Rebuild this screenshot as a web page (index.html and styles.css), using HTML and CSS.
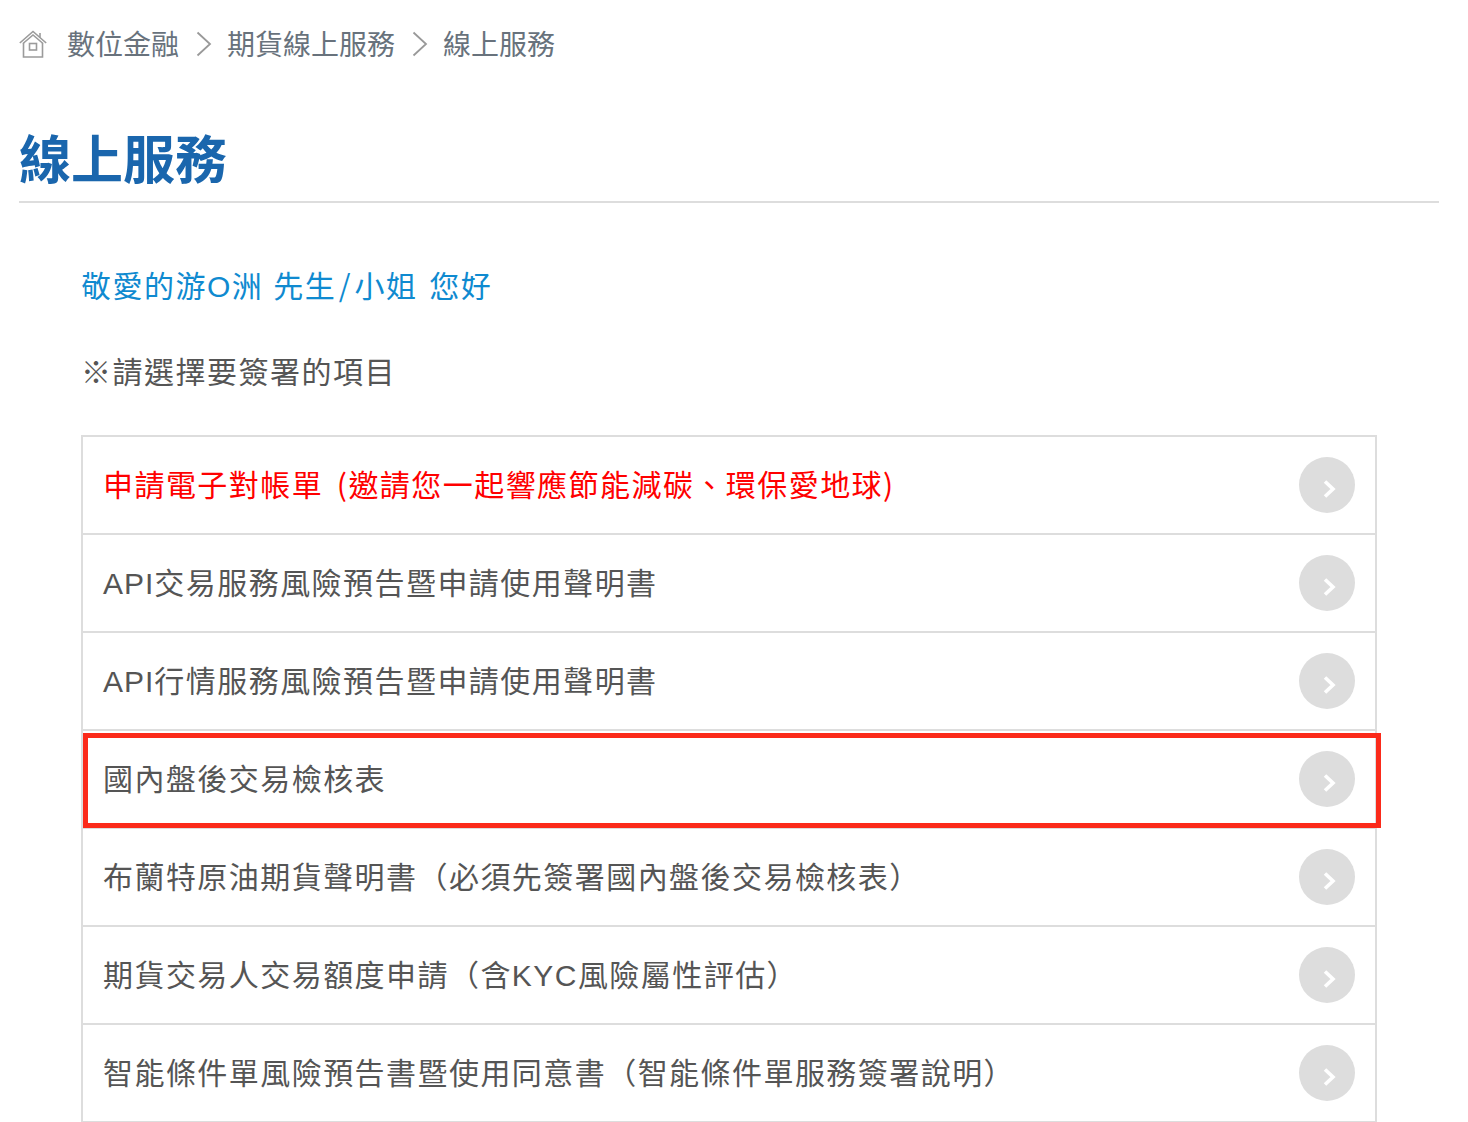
FILE: index.html
```html
<!DOCTYPE html>
<html lang="zh-Hant">
<head>
<meta charset="utf-8">
<title>線上服務</title>
<link rel="stylesheet" href="styles.css">
</head>
<body>
<nav class="crumbs">
  <svg class="home" width="28" height="28" viewBox="0 0 28 28" fill="none" stroke="#9b9b9b" stroke-width="1.6">
    <path d="M.8 13 14 1.500 27.200 13"/>
    <path d="M4 13.500 14 5l10 8.500"/>
    <path d="M4.500 13v14h19V13"/>
    <rect x="10.500" y="13.500" width="7" height="6.500"/>
    <path d="M21 3v4.500"/>
  </svg>
  <span class="crumb">數位金融</span>
  <svg class="sep" width="16" height="26" viewBox="0 0 16 26" fill="none" stroke="#999" stroke-width="1.8"><path d="M1.500 1.500 14 13 1.500 24.500"/></svg>
  <span class="crumb">期貨線上服務</span>
  <svg class="sep" width="16" height="26" viewBox="0 0 16 26" fill="none" stroke="#999" stroke-width="1.8"><path d="M1.500 1.500 14 13 1.500 24.500"/></svg>
  <span class="crumb">線上服務</span>
</nav>
<h1 class="title">線上服務</h1>
<main class="content">
  <p class="greet">敬愛的游O洲 先生<span class="slash">/</span><span class="gap">小姐</span> 您好</p>
  <p class="hint">※請選擇要簽署的項目</p>
  <ul class="list">
    <li class="row row-red"><span class="label">申請電子對帳單 (邀請您一起響應節能減碳、環保愛地球)</span><span class="go"><svg width="14" height="20" viewBox="0 0 14 20" fill="none" stroke="#fff" stroke-width="3.600"><path d="M3 2.500 11 10 3 17.500"/></svg></span></li>
    <li class="row"><span class="label"><span class="lat">API</span>交易服務風險預告暨申請使用聲明書</span><span class="go"><svg width="14" height="20" viewBox="0 0 14 20" fill="none" stroke="#fff" stroke-width="3.600"><path d="M3 2.500 11 10 3 17.500"/></svg></span></li>
    <li class="row"><span class="label"><span class="lat">API</span>行情服務風險預告暨申請使用聲明書</span><span class="go"><svg width="14" height="20" viewBox="0 0 14 20" fill="none" stroke="#fff" stroke-width="3.600"><path d="M3 2.500 11 10 3 17.500"/></svg></span></li>
    <li class="row"><span class="label">國內盤後交易檢核表</span><span class="go"><svg width="14" height="20" viewBox="0 0 14 20" fill="none" stroke="#fff" stroke-width="3.600"><path d="M3 2.500 11 10 3 17.500"/></svg></span><i class="mark"></i></li>
    <li class="row"><span class="label">布蘭特原油期貨聲明書（必須先簽署國內盤後交易檢核表）</span><span class="go"><svg width="14" height="20" viewBox="0 0 14 20" fill="none" stroke="#fff" stroke-width="3.600"><path d="M3 2.500 11 10 3 17.500"/></svg></span></li>
    <li class="row"><span class="label">期貨交易人交易額度申請（含KYC風險屬性評估）</span><span class="go"><svg width="14" height="20" viewBox="0 0 14 20" fill="none" stroke="#fff" stroke-width="3.600"><path d="M3 2.500 11 10 3 17.500"/></svg></span></li>
    <li class="row"><span class="label">智能條件單風險預告書暨使用同意書（智能條件單服務簽署說明）</span><span class="go"><svg width="14" height="20" viewBox="0 0 14 20" fill="none" stroke="#fff" stroke-width="3.600"><path d="M3 2.500 11 10 3 17.500"/></svg></span></li>
  </ul>
</main>
</body>
</html>
```
FILE: styles.css
```css
html, body {
  margin: 0;
  height: 1122px;
  overflow: hidden;
  background: #fff;
}
body {
  font-family: "Liberation Sans", "Noto Sans CJK TC", sans-serif;
  padding: 0 29px 0 19px;
  color: #555;
}
.crumbs {
  display: flex;
  align-items: center;
  height: 30px;
  padding-top: 29px;
  font-size: 28px;
  line-height: 30px;
  color: #68727c;
}
.crumb { padding-top: 4px; }
.home { margin-right: 20px; }
.sep { margin: 0 15px 0 17px; }
.title {
  margin: 67px 0 0;
  height: 75px;
  line-height: 70px;
  font-size: 52px;
  font-weight: 700;
  color: #1a66ad;
  border-bottom: 2px solid #ddd;
}
.content { padding: 0 62px; }
.greet {
  margin: 59px 0 0;
  height: 44px;
  line-height: 44px;
  font-size: 30px;
  letter-spacing: 1.5px;
  color: #0f8ad0;
}
.slash {
  margin: 0 2.500px;
  font-family: "Noto Sans CJK TC", sans-serif;
}
.gap { margin-right: 2px; }
.hint {
  margin: 45px 0 0;
  height: 44px;
  line-height: 44px;
  font-size: 30px;
  letter-spacing: 1.5px;
  color: #555;
}
.list {
  list-style: none;
  margin: 40px 0 0;
  padding: 0;
  border: solid #ddd;
  border-width: 2px 2px 0;
}
.row {
  position: relative;
  display: flex;
  align-items: center;
  justify-content: space-between;
  box-sizing: border-box;
  height: 98px;
  padding: 0 20px;
  border-bottom: 2px solid #ddd;
  font-size: 30px;
  letter-spacing: 1.45px;
  color: #555;
}
.label { padding-bottom: 4px; }
.lat { letter-spacing: 1px; }
.row-red {
  color: #f00;
  font-family: "Noto Sans CJK TC", sans-serif;
  word-spacing: 5.500px;
}
.go {
  display: flex;
  align-items: center;
  justify-content: center;
  width: 56px;
  height: 56px;
  border-radius: 50%;
  background: #ddd;
  padding: 7px 0 0 4px;
  box-sizing: border-box;
}
.mark {
  position: absolute;
  left: 0;
  top: 2px;
  width: 1298px;
  height: 95px;
  box-sizing: border-box;
  border: 5px solid #fb2a1a;
}
```
